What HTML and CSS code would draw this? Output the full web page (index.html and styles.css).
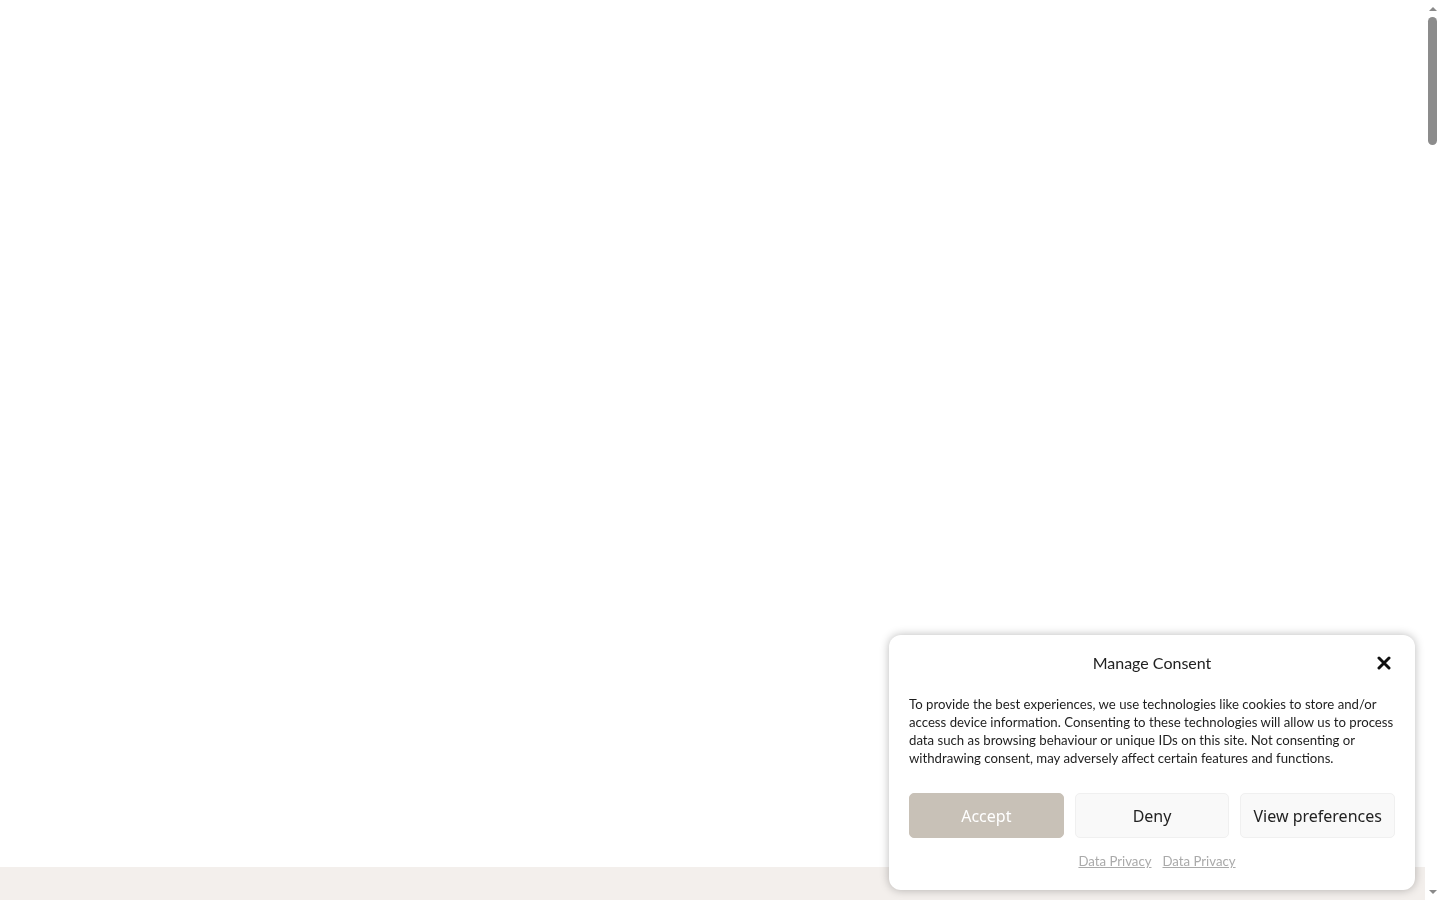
FILE: index.html
```html
<!DOCTYPE html>
<html lang="en">
<head>
<meta charset="utf-8">
<title>Manage Consent</title>
<link rel="stylesheet" href="styles.css">
</head>
<body>
<main class="page">
  <section class="hero"></section>
  <section class="band"></section>
</main>
<div class="scrollbar" aria-hidden="true">
  <span class="sb-arrow sb-up"></span>
  <div class="sb-track"><span class="sb-thumb"></span></div>
  <span class="sb-arrow sb-down"></span>
</div>
<div class="consent" role="dialog" aria-label="Manage Consent">
  <div class="consent-head">
    <div class="consent-title">Manage Consent</div>
    <button class="consent-close" aria-label="Close">
      <svg width="16" height="16" viewBox="0 0 16 16"><path d="M3 3L13 13M13 3L3 13" stroke="#111" stroke-width="3" stroke-linecap="round"/></svg>
    </button>
  </div>
  <p class="consent-text">To provide the best experiences, we use technologies like cookies to store and/or access device information. Consenting to these technologies will allow us to process data such as browsing behaviour or unique IDs on this site. Not consenting or withdrawing consent, may adversely affect certain features and functions.</p>
  <div class="consent-buttons">
    <button class="btn btn-accept">Accept</button>
    <button class="btn btn-light">Deny</button>
    <button class="btn btn-light">View preferences</button>
  </div>
  <div class="consent-links">
    <a href="#">Data Privacy</a>
    <a href="#">Data Privacy</a>
  </div>
</div>
</body>
</html>
```
FILE: styles.css
```css
html, body {
  margin: 0;
  padding: 0;
}
html {
  scrollbar-width: none;
}
body {
  background: #fff;
  font-family: "Lato", "Noto Sans", sans-serif;
}
.page {
  display: flex;
  flex-direction: column;
}
.hero {
  height: 867px;
  background: #fff;
}
.band {
  height: 5200px;
  background: #f3efec;
}
.scrollbar {
  position: fixed;
  top: 0;
  right: 0;
  bottom: 0;
  width: 15px;
  background: #fff;
  display: flex;
  flex-direction: column;
  align-items: center;
}
.sb-arrow {
  flex: none;
  height: 17px;
  width: 15px;
  display: flex;
  align-items: center;
  justify-content: center;
}
.sb-up::before,
.sb-down::before {
  content: "";
  width: 0;
  height: 0;
  border-left: 4px solid transparent;
  border-right: 4px solid transparent;
}
.sb-up::before {
  border-bottom: 4px solid #8a8a8a;
}
.sb-down::before {
  border-top: 4px solid #8a8a8a;
}
.sb-track {
  flex: 1;
  width: 15px;
  display: flex;
  justify-content: center;
}
.sb-thumb {
  width: 9px;
  height: 128px;
  background: #8c8c8c;
  border-radius: 5px;
}
.consent {
  position: fixed;
  right: 25px;
  bottom: 10px;
  width: 526px;
  box-sizing: border-box;
  padding: 17px 20px 21px;
  background: #fff;
  border-radius: 12px;
  box-shadow: 0 0 10px rgba(0,0,0,0.28);
  color: #1e1e1e;
}
.consent-head {
  position: relative;
  display: flex;
  justify-content: center;
  align-items: center;
  height: 20px;
}
.consent-title {
  font-size: 16px;
  color: #222;
}
.consent-close {
  position: absolute;
  right: 3px;
  top: 3px;
  border: 0;
  background: none;
  padding: 0;
  width: 16px;
  height: 16px;
  display: flex;
}
.consent-text {
  margin: 23px 0 0;
  font-size: 13.2px;
  line-height: 18px;
  color: #1e1e1e;
}
.consent-buttons {
  display: flex;
  gap: 11px;
  margin-top: 26px;
}
.btn {
  flex: 1;
  height: 45px;
  border-radius: 5px;
  font-family: "Noto Sans", sans-serif;
  font-size: 16px;
  cursor: pointer;
}
.btn-accept {
  background: #c8c1b7;
  color: #fff;
  border: 1px solid #c8c1b7;
}
.btn-light {
  background: #f9f9f9;
  color: #222;
  border: 1px solid #f0f0f0;
}
.consent-links {
  display: flex;
  justify-content: center;
  gap: 11px;
  margin: 15px 0 0 10px;
}
.consent-links a {
  font-size: 13.2px;
  color: #aaa;
  text-decoration: underline;
}
```
